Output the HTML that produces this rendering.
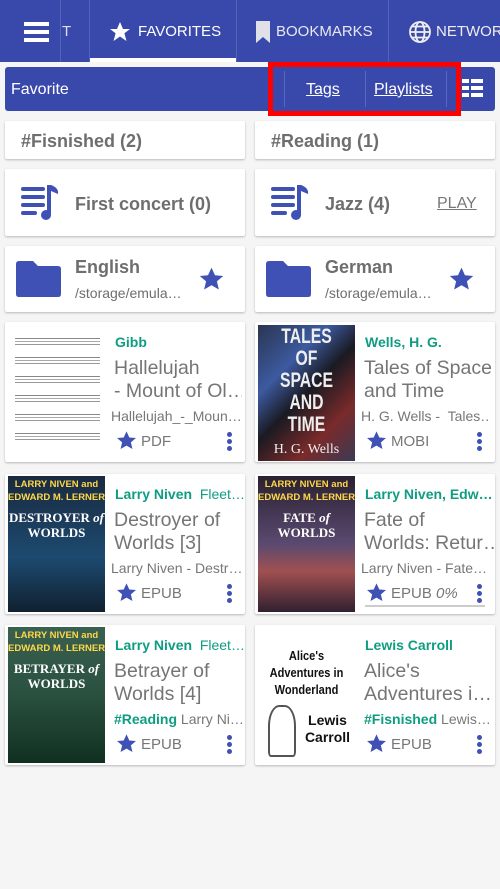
<!DOCTYPE html>
<html><head><meta charset="utf-8"><style>
*{box-sizing:border-box;margin:0;padding:0}
body{width:500px;height:889px;background:#f5f5f5;font-family:"Liberation Sans",sans-serif;position:relative;overflow:hidden}
.a{position:absolute}
.card{position:absolute;background:#fff;box-shadow:0 1px 2px rgba(0,0,0,.25);border-radius:2px}
.g{color:#6e6e6e}
.teal{color:#0f9d82;font-weight:bold;font-size:14px}
.title{font-size:19.5px;color:#757575;line-height:23px}
.sub{font-size:14px;color:#777;white-space:nowrap;overflow:hidden}
.dots{position:absolute;width:5px}
.dots i{display:block;width:5px;height:5px;border-radius:50%;background:#3f51b5;margin-bottom:2px}
.auth{position:absolute;color:#ffd84a;font:bold 9.5px/13px 'Liberation Sans';text-align:center;white-space:nowrap}
.bt{position:absolute;color:#fff;font:bold 13px/15px 'Liberation Serif';text-align:center;white-space:nowrap}
</style></head><body>
<div class="a" style="left:0;top:0;width:500px;height:62px;background:#3949ab"></div>
<div class="a" style="left:24px;top:22px;width:25px;height:4px;background:#fff;box-shadow:0 8px 0 #fff,0 16px 0 #fff"></div>
<div class="a" style="left:60px;top:0;width:1px;height:62px;background:#5363bb"></div>
<div class="a" style="left:62px;top:23px;color:#dde;font-size:15px">T</div>
<div class="a" style="left:89px;top:0;width:1px;height:62px;background:#5363bb"></div>
<div class="a" style="left:90px;top:58px;width:146px;height:4px;background:#fff"></div>
<svg class="a" style="left:108px;top:20px" width="24" height="24" viewBox="0 0 24 24"><path fill="#fff" d="M12 2l3 7h7l-5.6 4.3 2.1 7.7L12 16.5 5.5 21l2.1-7.7L2 9h7z"/></svg>
<div class="a" style="left:138px;top:23px;color:#fff;font-size:15px">FAVORITES</div>
<div class="a" style="left:236px;top:0;width:1px;height:62px;background:#5363bb"></div>
<svg class="a" style="left:255px;top:20px" width="16" height="24" viewBox="0 0 16 24"><path fill="#e0e0e8" d="M1 1h14v22l-7-6-7 6z"/></svg>
<div class="a" style="left:276px;top:23px;color:#e8e8f0;font-size:15px">BOOKMARKS</div>
<div class="a" style="left:388px;top:0;width:1px;height:62px;background:#5363bb"></div>
<svg class="a" style="left:408px;top:20px" width="24" height="24" viewBox="0 0 24 24" fill="none" stroke="#eee" stroke-width="1.8"><circle cx="12" cy="12" r="10"/><ellipse cx="12" cy="12" rx="4.5" ry="10"/><path d="M2 12h20M4 6.5h16M4 17.5h16"/></svg>
<div class="a" style="left:436px;top:23px;color:#eee;font-size:15px;white-space:nowrap">NETWOR</div>

<div class="a" style="left:5px;top:67px;width:490px;height:44px;background:#3949ab;border-radius:3px"></div>
<div class="a" style="left:11px;top:81px;color:#fff;font-size:16px">Favorite</div>
<div class="a" style="left:284px;top:71px;width:1px;height:36px;background:#5868c0"></div>
<div class="a" style="left:365px;top:71px;width:1px;height:36px;background:#5868c0"></div>
<div class="a" style="left:446px;top:71px;width:1px;height:36px;background:#5868c0"></div>
<div class="a" style="left:306px;top:81px;color:#fff;font-size:16px;text-decoration:underline">Tags</div>
<div class="a" style="left:374px;top:81px;color:#fff;font-size:16px;text-decoration:underline">Playlists</div>
<div class="a" style="left:268px;top:62px;width:193px;height:54px;border:5px solid #f00"></div>
<div class="a" style="left:462px;top:79px;width:7px;height:4px;background:#fff;box-shadow:0 7px 0 #fff,0 14px 0 #fff"></div>
<div class="a" style="left:471px;top:79px;width:12px;height:4px;background:#fff;box-shadow:0 7px 0 #fff,0 14px 0 #fff"></div>

<div class="card" style="left:5px;top:121px;width:240px;height:38px"></div>
<div class="a g" style="left:21px;top:131px;font-size:18px;font-weight:bold">#Fisnished (2)</div>
<div class="card" style="left:255px;top:121px;width:240px;height:38px"></div>
<div class="a g" style="left:271px;top:131px;font-size:18px;font-weight:bold">#Reading (1)</div>

<div class="card" style="left:5px;top:169px;width:240px;height:67px"></div>
<div class="card" style="left:255px;top:169px;width:240px;height:67px"></div>
<svg class="a" style="left:21px;top:185px" width="40" height="36" viewBox="0 0 40 36"><g fill="#3f51b5"><rect x="0" y="2" width="24" height="4" rx="2"/><rect x="0" y="10" width="24" height="4" rx="2"/><rect x="0" y="18" width="24" height="4" rx="2"/><rect x="0" y="26" width="16" height="4" rx="2"/><rect x="26" y="0" width="4" height="30"/><circle cx="25" cy="30" r="5"/><path d="M30 0q8 3 7 9l-7-3z"/></g></svg>
<svg class="a" style="left:271px;top:185px" width="40" height="36" viewBox="0 0 40 36"><g fill="#3f51b5"><rect x="0" y="2" width="24" height="4" rx="2"/><rect x="0" y="10" width="24" height="4" rx="2"/><rect x="0" y="18" width="24" height="4" rx="2"/><rect x="0" y="26" width="16" height="4" rx="2"/><rect x="26" y="0" width="4" height="30"/><circle cx="25" cy="30" r="5"/><path d="M30 0q8 3 7 9l-7-3z"/></g></svg>
<div class="a g" style="left:75px;top:194px;font-size:18px;font-weight:bold">First concert (0)</div>
<div class="a g" style="left:325px;top:194px;font-size:18px;font-weight:bold">Jazz (4)</div>
<div class="a" style="left:437px;top:195px;font-size:16px;color:#777;text-decoration:underline">PLAY</div>

<div class="card" style="left:5px;top:246px;width:240px;height:66px"></div>
<div class="card" style="left:255px;top:246px;width:240px;height:66px"></div>
<svg class="a" style="left:16px;top:261px" width="45" height="36" viewBox="0 0 45 36"><path fill="#3f51b5" d="M3 0h14l5 5h20q3 0 3 3v25q0 3-3 3H3q-3 0-3-3V3q0-3 3-3z"/></svg>
<svg class="a" style="left:266px;top:261px" width="45" height="36" viewBox="0 0 45 36"><path fill="#3f51b5" d="M3 0h14l5 5h20q3 0 3 3v25q0 3-3 3H3q-3 0-3-3V3q0-3 3-3z"/></svg>
<div class="a g" style="left:75px;top:257px;font-size:18px;font-weight:bold">English</div>
<div class="a g" style="left:75px;top:285px;font-size:14px">/storage/emula…</div>
<div class="a g" style="left:325px;top:257px;font-size:18px;font-weight:bold">German</div>
<div class="a g" style="left:325px;top:285px;font-size:14px">/storage/emula…</div>
<svg class="a" style="left:198px;top:266px" width="27" height="26" viewBox="0 0 24 24"><path fill="#3f51b5" d="M12 1.5l3.2 7 7.6.7-5.8 5 1.8 7.5L12 17.8l-6.8 3.9L7 14.2l-5.8-5 7.6-.7z"/></svg>
<svg class="a" style="left:448px;top:266px" width="27" height="26" viewBox="0 0 24 24"><path fill="#3f51b5" d="M12 1.5l3.2 7 7.6.7-5.8 5 1.8 7.5L12 17.8l-6.8 3.9L7 14.2l-5.8-5 7.6-.7z"/></svg>

<div class="card" style="left:5px;top:322px;width:240px;height:140px"></div>
<div class="card" style="left:255px;top:322px;width:240px;height:140px"></div>
<div class="card" style="left:5px;top:474px;width:240px;height:140px"></div>
<div class="card" style="left:255px;top:474px;width:240px;height:140px"></div>
<div class="card" style="left:5px;top:625px;width:240px;height:140px"></div>
<div class="card" style="left:255px;top:625px;width:240px;height:140px"></div>

<div class="a" style="left:15px;top:332px;width:85px;height:120px;background:repeating-linear-gradient(#fff 0 6px,#888 6px 7px,#fff 7px 9px,#aaa 9px 10px,#fff 10px 12px,#999 12px 13px,#fff 13px 19px)"></div>
<div class="a" style="left:258px;top:325px;width:97px;height:136px;background:linear-gradient(135deg,#2a3550,#3c5aa0 30%,#1a1a22 50%,#7a2a2a 75%,#3a3a55)"></div>
<div class="a" style="left:258px;top:326px;width:97px;color:#eee;font:bold 21px/22px 'Liberation Sans';text-align:center;transform:scaleX(.75)">TALES<br>OF<br>SPACE<br>AND<br>TIME</div>
<div class="a" style="left:258px;top:442px;width:97px;color:#eee;font:14px 'Liberation Serif';text-align:center">H. G. Wells</div>

<div class="a" style="left:8px;top:476px;width:97px;height:136px;background:linear-gradient(#1a2a40,#1d4a70 60%,#102030)"></div>
<div class="auth" style="left:8px;top:478px;width:97px">LARRY NIVEN and<br>EDWARD M. LERNER</div>
<div class="bt" style="left:8px;top:510px;width:97px">DESTROYER <i>of</i><br>WORLDS</div>
<div class="a" style="left:258px;top:476px;width:97px;height:136px;background:linear-gradient(#2a2030,#5a4a70 50%,#a05050 70%,#302030)"></div>
<div class="auth" style="left:258px;top:478px;width:97px">LARRY NIVEN and<br>EDWARD M. LERNER</div>
<div class="bt" style="left:258px;top:510px;width:97px">FATE <i>of</i><br>WORLDS</div>
<div class="a" style="left:8px;top:627px;width:97px;height:136px;background:linear-gradient(#3a6050,#2a5040 50%,#103020)"></div>
<div class="auth" style="left:8px;top:629px;width:97px">LARRY NIVEN and<br>EDWARD M. LERNER</div>
<div class="bt" style="left:8px;top:661px;width:97px">BETRAYER <i>of</i><br>WORLDS</div>
<div class="a" style="left:258px;top:627px;width:97px;height:136px;background:#fff"></div>
<div class="a" style="left:258px;top:647px;color:#111;font:bold 13px/17px 'Liberation Sans';text-align:center;width:97px;white-space:nowrap;transform:scaleX(.85)">Alice's<br>Adventures in<br>Wonderland</div>
<div class="a" style="left:300px;top:712px;color:#111;font:bold 14px/17px 'Liberation Sans';text-align:center;width:55px">Lewis<br>Carroll</div>
<div class="a" style="left:268px;top:705px;width:28px;height:52px;border:2px solid #555;border-radius:40% 40% 10% 10%"></div>

<div class="a teal" style="left:115px;top:334px">Gibb</div>
<div class="a title" style="left:114px;top:357px;width:128px;white-space:nowrap;overflow:hidden">Hallelujah<br>- Mount of Ol…</div>
<div class="a sub" style="left:111px;top:408px;width:130px">Hallelujah_-_Moun…</div>
<div class="a teal" style="left:365px;top:334px">Wells, H. G.</div>
<div class="a title" style="left:364px;top:357px;width:130px;white-space:nowrap;overflow:hidden">Tales of Space<br>and Time</div>
<div class="a sub" style="left:361px;top:408px;width:130px">H. G. Wells -&nbsp; Tales…</div>

<div class="a teal" style="left:115px;top:486px">Larry Niven <span style="font-weight:normal">&nbsp;Fleet…</span></div>
<div class="a title" style="left:114px;top:509px;width:128px;white-space:nowrap;overflow:hidden">Destroyer of<br>Worlds [3]</div>
<div class="a sub" style="left:111px;top:560px;width:130px">Larry Niven - Destr…</div>
<div class="a teal" style="left:365px;top:486px;width:128px;white-space:nowrap;overflow:hidden">Larry Niven, Edw…</div>
<div class="a title" style="left:364px;top:509px;width:130px;white-space:nowrap;overflow:hidden">Fate of<br>Worlds: Retur…</div>
<div class="a sub" style="left:361px;top:560px;width:130px">Larry Niven - Fate…</div>
<div class="a" style="left:365px;top:605px;width:120px;height:2px;background:#ccc"></div>

<div class="a teal" style="left:115px;top:637px">Larry Niven <span style="font-weight:normal">&nbsp;Fleet…</span></div>
<div class="a title" style="left:114px;top:660px;width:128px;white-space:nowrap;overflow:hidden">Betrayer of<br>Worlds [4]</div>
<div class="a sub" style="left:114px;top:711px;width:128px"><b style="color:#0f9d82">#Reading</b> Larry Ni…</div>
<div class="a teal" style="left:365px;top:637px">Lewis Carroll</div>
<div class="a title" style="left:364px;top:660px;width:130px;white-space:nowrap;overflow:hidden">Alice's<br>Adventures i…</div>
<div class="a sub" style="left:364px;top:711px;width:128px"><b style="color:#0f9d82">#Fisnished</b> Lewis…</div>

<svg class="a" style="left:116px;top:430px" width="21" height="21" viewBox="0 0 24 24"><path fill="#3f51b5" d="M12 1.5l3.2 7 7.6.7-5.8 5 1.8 7.5L12 17.8l-6.8 3.9L7 14.2l-5.8-5 7.6-.7z"/></svg>
<div class="a" style="left:141px;top:433px;font-size:15px;color:#777">PDF</div>
<div class="dots" style="left:227px;top:432px"><i></i><i></i><i></i></div>
<svg class="a" style="left:366px;top:430px" width="21" height="21" viewBox="0 0 24 24"><path fill="#3f51b5" d="M12 1.5l3.2 7 7.6.7-5.8 5 1.8 7.5L12 17.8l-6.8 3.9L7 14.2l-5.8-5 7.6-.7z"/></svg>
<div class="a" style="left:391px;top:433px;font-size:15px;color:#777">MOBI</div>
<div class="dots" style="left:477px;top:432px"><i></i><i></i><i></i></div>

<svg class="a" style="left:116px;top:582px" width="21" height="21" viewBox="0 0 24 24"><path fill="#3f51b5" d="M12 1.5l3.2 7 7.6.7-5.8 5 1.8 7.5L12 17.8l-6.8 3.9L7 14.2l-5.8-5 7.6-.7z"/></svg>
<div class="a" style="left:141px;top:585px;font-size:15px;color:#777">EPUB</div>
<div class="dots" style="left:227px;top:584px"><i></i><i></i><i></i></div>
<svg class="a" style="left:366px;top:582px" width="21" height="21" viewBox="0 0 24 24"><path fill="#3f51b5" d="M12 1.5l3.2 7 7.6.7-5.8 5 1.8 7.5L12 17.8l-6.8 3.9L7 14.2l-5.8-5 7.6-.7z"/></svg>
<div class="a" style="left:391px;top:585px;font-size:15px;color:#777">EPUB <i>0%</i></div>
<div class="dots" style="left:477px;top:584px"><i></i><i></i><i></i></div>

<svg class="a" style="left:116px;top:733px" width="21" height="21" viewBox="0 0 24 24"><path fill="#3f51b5" d="M12 1.5l3.2 7 7.6.7-5.8 5 1.8 7.5L12 17.8l-6.8 3.9L7 14.2l-5.8-5 7.6-.7z"/></svg>
<div class="a" style="left:141px;top:736px;font-size:15px;color:#777">EPUB</div>
<div class="dots" style="left:227px;top:735px"><i></i><i></i><i></i></div>
<svg class="a" style="left:366px;top:733px" width="21" height="21" viewBox="0 0 24 24"><path fill="#3f51b5" d="M12 1.5l3.2 7 7.6.7-5.8 5 1.8 7.5L12 17.8l-6.8 3.9L7 14.2l-5.8-5 7.6-.7z"/></svg>
<div class="a" style="left:391px;top:736px;font-size:15px;color:#777">EPUB</div>
<div class="dots" style="left:477px;top:735px"><i></i><i></i><i></i></div>
</body></html>
